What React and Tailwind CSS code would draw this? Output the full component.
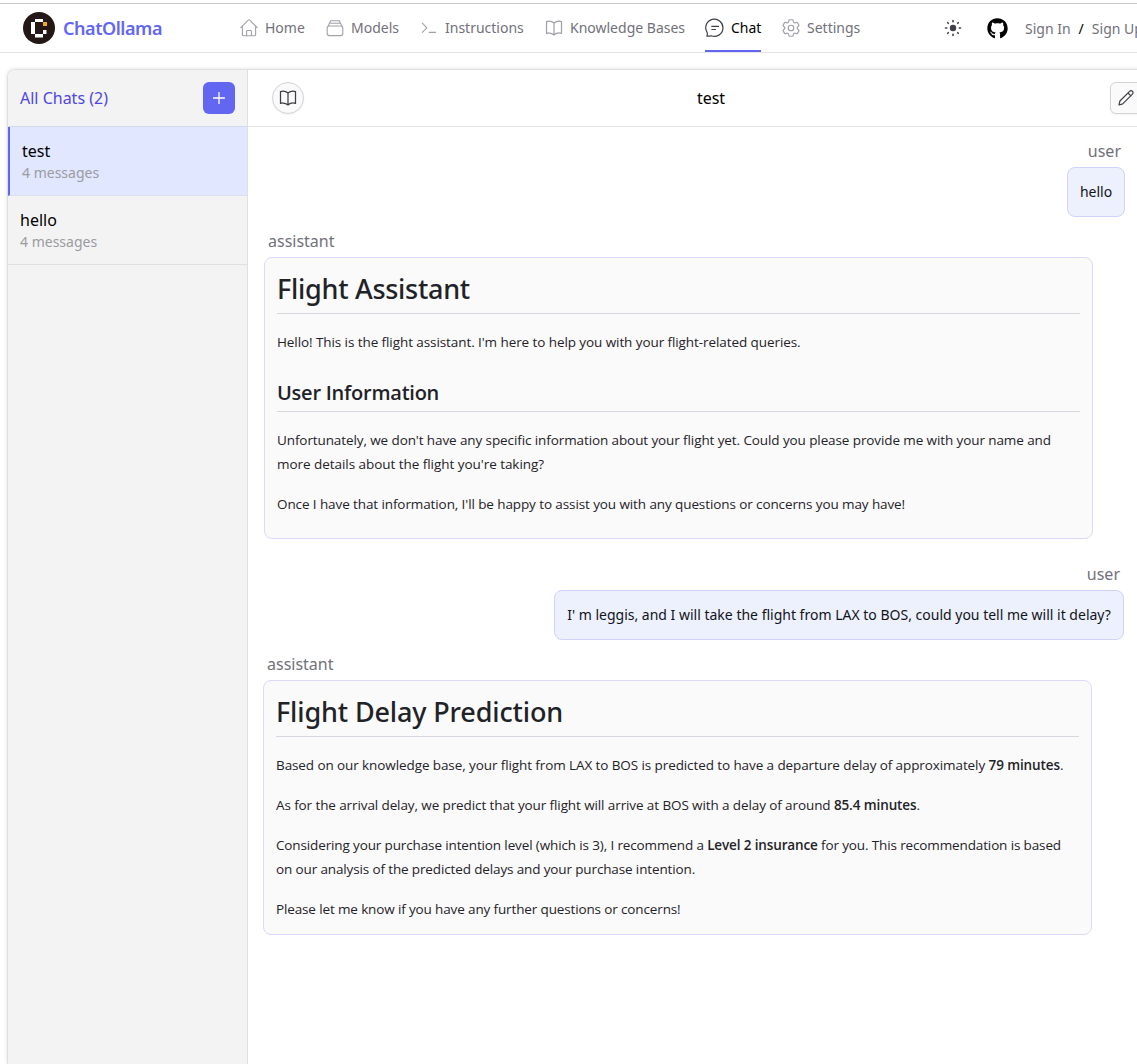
import React from "react";
import { HiOutlineBookOpen } from "react-icons/hi2";
import { FaGithub } from "react-icons/fa";

const stroke = {
  fill: "none",
  stroke: "currentColor",
  strokeLinecap: "round",
  strokeLinejoin: "round",
};

function Logo() {
  return (
    <svg width="32" height="32" viewBox="0 0 32 32" className="shrink-0">
      <circle cx="16" cy="16" r="16" fill="#231815" />
      <g fill="#fff">
        <rect x="12" y="7" width="8" height="3" />
        <rect x="8" y="10" width="4" height="12" />
        <rect x="12" y="22" width="8" height="3.5" />
        <rect x="20" y="18" width="3.5" height="4" />
      </g>
      <rect x="20" y="10" width="4" height="4" fill="#f5a623" />
    </svg>
  );
}

function HomeIcon() {
  return (
    <svg width="18" height="18" viewBox="0 0 18 18" {...stroke} strokeWidth="1.1">
      <path d="M.8 8.6 8.2 1.1a1.1 1.1 0 0 1 1.6 0l7.4 7.5M2.4 7.2v8.6c0 .6.4 1 1 1h11.2c.6 0 1-.4 1-1V7.2M6.6 16.6v-4.2c0-.5.4-.9.9-.9h3c.5 0 .9.4.9.9v4.2" />
    </svg>
  );
}

function ModelsIcon() {
  return (
    <svg width="18" height="18" viewBox="0 0 18 18" {...stroke} strokeWidth="1.1">
      <rect x="1.2" y="7" width="15.6" height="9.6" rx="2" />
      <path d="M2 7.4 3.4 4.3h11.2L16 7.4M3.6 4.2l1-2.4h8.800l1 2.4" />
    </svg>
  );
}

function PromptIcon() {
  return (
    <svg width="18" height="18" viewBox="0 0 18 18" {...stroke} strokeWidth="1.1">
      <path d="m2.3 4.2 4.6 4.6-4.6 4.6M9.2 13.4h6.4" />
    </svg>
  );
}

function BookIcon({ size }) {
  return <HiOutlineBookOpen size={size} strokeWidth={1.5} />;
}

function ChatIcon() {
  return (
    <svg width="20" height="20" viewBox="0 0 20 20" {...stroke} strokeWidth="1.2">
      <path d="M1.9 18.1c.5-1.3.7-2.4.2-3.7A8.6 8.6 0 1 1 6 17.7c-1.3.5-2.7.6-4.1.4ZM6.8 8.4h6.7M6.8 11.5h3.7" />
    </svg>
  );
}

function GearIcon() {
  return (
    <svg width="18" height="18" viewBox="2.2 2.2 19.6 19.6" {...stroke} strokeWidth="1.3">
      <path d="M9.594 3.94c.09-.542.56-.94 1.11-.94h2.593c.55 0 1.02.398 1.11.94l.213 1.281c.063.374.313.686.645.87.074.04.147.083.22.127.325.196.72.257 1.075.124l1.217-.456a1.125 1.125 0 0 1 1.37.49l1.296 2.247a1.125 1.125 0 0 1-.26 1.431l-1.003.827c-.293.241-.438.613-.43.992v.255c-.008.378.137.75.43.991l1.004.827c.424.35.534.955.26 1.43l-1.298 2.247a1.125 1.125 0 0 1-1.369.491l-1.217-.456c-.355-.133-.75-.072-1.076.124a6.47 6.47 0 0 1-.22.128c-.331.183-.581.495-.644.869l-.213 1.281c-.09.543-.56.94-1.11.94h-2.594c-.55 0-1.019-.398-1.11-.94l-.213-1.281c-.062-.374-.312-.686-.644-.87a6.52 6.52 0 0 1-.22-.127c-.325-.196-.72-.257-1.076-.124l-1.217.456a1.125 1.125 0 0 1-1.369-.49l-1.297-2.247a1.125 1.125 0 0 1 .26-1.431l1.004-.827c.292-.24.437-.613.43-.991v-.255c.007-.38-.138-.751-.43-.992l-1.004-.827a1.125 1.125 0 0 1-.26-1.43l1.297-2.247a1.125 1.125 0 0 1 1.37-.491l1.216.456c.356.133.751.072 1.076-.124.072-.044.146-.086.22-.128.332-.183.582-.495.644-.869Z" />
      <circle cx="12" cy="12" r="3" />
    </svg>
  );
}

function SunIcon() {
  return (
    <svg width="18" height="18" viewBox="0 0 18 18" {...stroke} strokeWidth="1.6">
      <circle cx="9" cy="9" r="3.2" fill="currentColor" stroke="none" />
      <path d="M9 1.5v1.2M9 15.3v1.2M1.5 9h1.2M15.3 9h1.2M3.7 3.7l.6.6M13.7 13.7l.6.6M3.7 14.3l.6-.6M13.7 4.3l.6-.6" />
    </svg>
  );
}

function PencilIcon() {
  return (
    <svg width="18" height="18" viewBox="0 0 18 18" {...stroke} strokeWidth="1.2">
      <path d="m2 16 .9-4L12.6 2.3a1.9 1.9 0 0 1 2.8 0 1.9 1.9 0 0 1 0 2.8L5.7 14.9 2 16ZM11 4l2.9 2.9" />
    </svg>
  );
}

const nav = [
  { label: "Home", icon: <HomeIcon />, cls: "ml-[78px] w-[65px]" },
  { label: "Models", icon: <ModelsIcon />, cls: "ml-[21px] w-[73px]" },
  { label: "Instructions", icon: <PromptIcon />, cls: "ml-[21px] w-[104px]" },
  { label: "Knowledge Bases", icon: <BookIcon size={20} />, cls: "ml-[21px] w-[140px]" },
  { label: "Chat", icon: <ChatIcon />, cls: "ml-[21px] w-14", active: true },
  { label: "Settings", icon: <GearIcon />, cls: "ml-5 w-[79px]" },
];

function Header() {
  return (
    <header className="mt-[3px] flex h-[50px] shrink-0 items-stretch border-y border-t-[#c9c9cc] border-b-[#e4e4e7]">
      <div className="ml-[23px] flex w-[138px] min-w-0 shrink-0 items-center gap-2">
        <Logo />
        <span className="whitespace-nowrap text-[18px] font-semibold tracking-[-0.45px] text-[#6366f1]">ChatOllama</span>
      </div>
      <nav className="flex shrink-0 text-[14px] text-[#71717a]">
        {nav.map((n) => (
          <div key={n.label} className={"relative flex shrink-0 items-center whitespace-nowrap " + n.cls + (n.active ? " text-black" : "")}>
            <span className={"mr-1.5 flex w-5 shrink-0 justify-center " + (n.active ? "text-[#3f3f46]" : "text-[#a1a1aa]")}>{n.icon}</span>
            <span className="pb-0.5">{n.label}</span>
            {n.active && <i className="absolute inset-x-0 bottom-0 h-0.5 bg-[#6366f1]" />}
          </div>
        ))}
      </nav>
      <div className="ml-[84px] flex items-center whitespace-nowrap text-[14px] text-[#71717a]">
        <span className="text-[#3f3f46]"><SunIcon /></span>
        <span className="ml-[25px] text-black"><FaGithub size={21} /></span>
        <span className="ml-[17px]">Sign In</span>
        <span className="ml-2 text-black">/</span>
        <span className="ml-2">Sign Up</span>
      </div>
    </header>
  );
}

const chats = [
  { title: "test", count: "4 messages", cls: "border-l-2 border-b-[#dcdff0] border-l-[#6366f1] bg-[#e0e7ff]" },
  { title: "hello", count: "4 messages", cls: "border-b-[#e0e0e0]" },
];

function Sidebar() {
  return (
    <aside className="flex w-[240px] shrink-0 flex-col border-r border-[#e0e0e0] bg-[#f3f3f3]">
      <div className="flex h-[57px] items-center justify-between border-b border-[#d5d8f5] px-3">
        <span className="text-base text-[#4f46e5]">All Chats (2)</span>
        <button className="flex size-8 items-center justify-center rounded-md bg-[#6366f1] text-white">
          <svg width="12" height="12" viewBox="0 0 12 12" {...stroke} strokeWidth="1.3"><path d="M6 .5v11M.5 6h11" /></svg>
        </button>
      </div>
      {chats.map((c) => (
        <div key={c.title} className={"flex h-[69px] flex-col justify-center border-b pl-3 " + c.cls}>
          <span className="text-base leading-6">{c.title}</span>
          <span className="text-sm leading-5 text-[#9b9b9f]">{c.count}</span>
        </div>
      ))}
    </aside>
  );
}

function Line({ cls, children }) {
  return <span className={"block h-6 whitespace-nowrap " + cls}>{children}</span>;
}

function Title({ cls, children }) {
  return (
    <h1 className={"h-14 whitespace-nowrap border-b border-[#d5d8de] pt-[9px] font-['Noto_Sans',sans-serif] text-[27px] font-medium leading-[44px] " + cls}>
      {children}
    </h1>
  );
}

const article = "w-[829px] rounded-lg border border-[#ddd9f8] bg-[#fafafa] px-3 font-['Open_Sans',sans-serif] text-[13.5px] leading-6 text-[#1f2328]";
const bubble = "flex h-[50px] items-center justify-center self-end whitespace-nowrap rounded-lg border border-[#d0d2fa] bg-[#edf1fe] text-sm text-[#111418]";
const role = "text-base leading-6 text-[#71717a]";

export default function App() {
  return (
    <div className="flex h-[1064px] w-[1137px] flex-col overflow-hidden bg-white font-['Noto_Sans',sans-serif] text-black">
      <Header />
      <div className="ml-[7px] mt-4 flex w-[1150px] grow overflow-hidden rounded-tl-lg border-l border-t border-[#e0e0e0] shadow-[0_0_4px_rgba(0,0,0,0.12)]">
        <Sidebar />
        <main className="flex grow flex-col">
          <div className="flex h-[57px] w-[889px] shrink-0 items-center border-b border-[#e4e4e7]">
            <button className="ml-6 flex size-8 shrink-0 items-center justify-center rounded-full border border-[#d4d4d8] bg-[#fafafa] text-[#3f3f46] shadow-xs">
              <BookIcon size={20} />
            </button>
            <span className="grow pl-2 text-center text-base">test</span>
            <button className="-mr-2 flex h-8 w-[35px] shrink-0 items-center justify-center rounded-md border border-[#d4d4d8] bg-[#fafafa] pr-[3px] text-[#3f3f46] shadow-xs">
              <PencilIcon />
            </button>
          </div>
          <div className="flex w-[889px] flex-col pl-4 pr-3">
            <div className={role + " mt-3 self-end pr-1"}>user</div>
            <div className={bubble + " mt-1 w-[58px]"}>hello</div>
            <div className={role + " mt-3 pl-1"}>assistant</div>
            <article className={article + " mt-1 h-[282px]"}>
              <Title cls="tracking-[-0.27px]">Flight Assistant</Title>
              <p className="mt-4"><Line cls="tracking-[-0.082px]">Hello! This is the flight assistant. I'm here to help you with your flight-related queries.</Line></p>
              <h2 className="mt-6 h-[34px] whitespace-nowrap border-b border-[#d5d8de] pt-px text-[20px] font-semibold leading-[28px] tracking-[-0.24px]">User Information</h2>
              <p className="mt-4">
                <Line cls="tracking-[-0.1px]">Unfortunately, we don't have any specific information about your flight yet. Could you please provide me with your name and</Line>
                <Line cls="tracking-[-0.045px]">more details about the flight you're taking?</Line>
              </p>
              <p className="mt-4"><Line cls="tracking-[-0.1px]">Once I have that information, I'll be happy to assist you with any questions or concerns you may have!</Line></p>
            </article>
            <div className={role + " mt-[23px] self-end pr-[5px]"}>user</div>
            <div className={bubble + " mr-px mt-1 w-[570px]"}>I' m leggis, and I will take the flight from LAX to BOS, could you tell me will it delay?</div>
            <div className={role + " mt-3 pl-[3px]"}>assistant</div>
            <article className={article + " -ml-px mt-1 h-[255px]"}>
              <Title cls="tracking-[-0.14px]">Flight Delay Prediction</Title>
              <p className="mt-4"><Line cls="tracking-[-0.094px]">Based on our knowledge base, your flight from LAX to BOS is predicted to have a departure delay of approximately <b className="font-semibold">79 minutes</b>.</Line></p>
              <p className="mt-4"><Line cls="tracking-[-0.103px]">As for the arrival delay, we predict that your flight will arrive at BOS with a delay of around <b className="font-semibold">85.4 minutes</b>.</Line></p>
              <p className="mt-4">
                <Line cls="tracking-[-0.132px]">Considering your purchase intention level (which is 3), I recommend a <b className="font-semibold">Level 2 insurance</b> for you. This recommendation is based</Line>
                <Line cls="tracking-[-0.133px]">on our analysis of the predicted delays and your purchase intention.</Line>
              </p>
              <p className="mt-4"><Line cls="tracking-[-0.135px]">Please let me know if you have any further questions or concerns!</Line></p>
            </article>
          </div>
        </main>
      </div>
    </div>
  );
}
